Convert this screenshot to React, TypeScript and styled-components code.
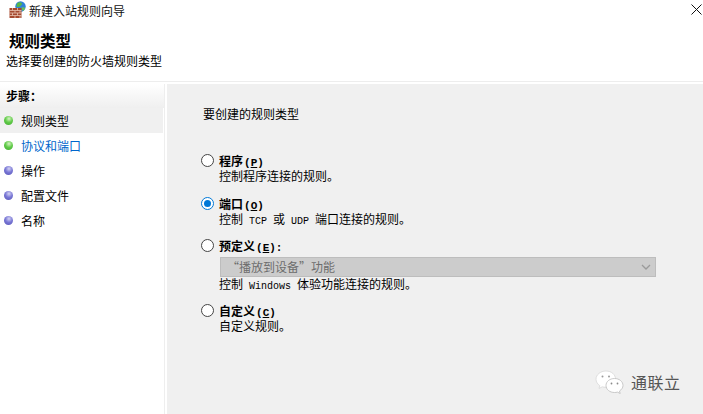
import React from "react";
import styled, { createGlobalStyle } from "styled-components";

const cjk = `"Noto Sans CJK SC", "Liberation Sans", sans-serif`;

const Global = createGlobalStyle`
  html, body { margin: 0; padding: 0; background: #fff; }
  body { font-family: ${cjk}; font-size: 12px; color: #000; }
  #root { width: 703px; height: 414px; overflow: hidden; }
`;

const Window = styled.div`
  position: relative;
  width: 703px;
  height: 414px;
  display: flex;
  flex-direction: column;
  background: #fff;
  overflow: hidden;
`;
const TitleBar = styled.div`
  height: 22px;
  display: flex;
  align-items: center;
  padding-left: 9px;
  gap: 3px;
  line-height: 20px;
`;
const TitleIcon = styled.svg`
  width: 17px;
  height: 17px;
  align-self: flex-start;
  margin-top: 1px;
`;
const TitleText = styled.span`
  flex: 1;
  color: #111;
`;
const Close = styled.svg`
  width: 11px;
  height: 11px;
  margin-right: 1px;
  margin-top: -3px;
`;
const Header = styled.header`
  height: 60px;
  box-sizing: border-box;
  border-bottom: 1px solid #ededed;
  display: flex;
  flex-direction: column;
  padding: 7px 0 0 6px;
`;
const Heading = styled.h1`
  margin: 0 0 0 3px;
  font-size: 15.5px;
  font-weight: 700;
  line-height: 22px;
`;
const Sub = styled.div`
  line-height: 18px;
  margin-top: 1px;
`;
const Body = styled.div`
  flex: 1;
  display: flex;
  margin-top: 2px;
  min-height: 0;
`;
const Side = styled.nav`
  width: 164px;
  border-right: 1px solid #eeeeee;
  margin-right: 2px;
  flex: none;
`;
const StepsHead = styled.div`
  height: 24px;
  box-sizing: border-box;
  padding: 0 0 0 6px;
  line-height: 24px;
  font-weight: 700;
  background: linear-gradient(#ffffff, #efefef);
`;
const Step = styled.div<{ $sel?: boolean; $link?: boolean }>`
  height: 25px;
  display: flex;
  align-items: center;
  gap: 8px;
  padding-left: 4px;
  width: 159px;
  background: ${(p) => (p.$sel ? "#f0f0f0" : "transparent")};
  color: ${(p) => (p.$link ? "#0066cc" : "#000")};
`;
const Dot = styled.span<{ $done?: boolean }>`
  width: 9px;
  height: 9px;
  border-radius: 50%;
  flex: none;
  background: ${(p) =>
    p.$done
      ? "radial-gradient(circle at 55% 30%, #d6f3c4 0, #62cc4a 45%, #3fa82e 100%)"
      : "radial-gradient(circle at 55% 30%, #d5d4f3 0, #7a78d6 45%, #5553b5 100%)"};
`;
const Panel = styled.main`
  flex: 1;
  background: #f0f0f0;
  padding: 21px 0 0 36px;
  display: flex;
  flex-direction: column;
`;
const Prompt = styled.div`
  line-height: 18px;
  margin-bottom: 30px;
`;
const Option = styled.div<{ $gap: number }>`
  display: grid;
  grid-template-columns: 18px 1fr;
  margin-left: -2px;
  margin-bottom: ${(p) => p.$gap}px;
`;
const Radio = styled.span<{ $on?: boolean }>`
  width: 13px;
  height: 13px;
  box-sizing: border-box;
  border-radius: 50%;
  background: #fff;
  border: 1px solid ${(p) => (p.$on ? "#0078d7" : "#444")};
  align-self: center;
  position: relative;
  &::after {
    content: "";
    display: ${(p) => (p.$on ? "block" : "none")};
    position: absolute;
    inset: 2px;
    border-radius: 50%;
    background: #0078d7;
  }
`;
const OptLabel = styled.div`
  font-weight: 700;
  line-height: 15px;
  height: 15px;
`;
const Paren = styled.span`
  font-family: "Liberation Mono", monospace;
  font-size: 11px;
  font-weight: 700;
  padding-left: 1px;
`;
const Key = styled.span`
  text-decoration: underline;
`;
const Latin = styled.span`
  font-family: "Liberation Mono", monospace;
  font-size: 10px;
  white-space: pre;
`;
const Desc = styled.div`
  grid-column: 2;
  line-height: 15px;
  height: 15px;
`;
const Combo = styled.div`
  grid-column: 2;
  width: 436px;
  height: 20px;
  box-sizing: border-box;
  margin: 4px 0 -1px 1px;
  background: #cccccc;
  border: 1px solid #bdbdbd;
  color: #6d6d6d;
  display: flex;
  align-items: center;
  justify-content: space-between;
  padding: 0 4px 0 6px;
  line-height: 18px;
`;
const Watermark = styled.div`
  position: absolute;
  left: 595px;
  top: 370px;
  display: flex;
  align-items: center;
  gap: 7px;
  color: #555;
  font-size: 16px;
  letter-spacing: 0.5px;
`;

function WallIcon() {
  return (
    <TitleIcon viewBox="0 0 17 17">
      <circle cx="11.500" cy="5.500" r="5.200" fill="#2f83d8" />
      <path d="M8 2.500c2-1.600 4-1.400 5 0 .3 1.600-1.500 1.600-2 3-1 .4-2.500 1-3.500 0z" fill="#58b848" />
      <path d="M12.500 6.500c1.400-.6 2.600-.3 3.600.2-.2 1.600-1 2.600-2 3.200-.9-.9-1.600-2-1.600-3.400z" fill="#6cc158" />
      <rect x="0.500" y="7" width="12" height="10" fill="#a5492f" />
      <path d="M.5 9.500h12M.5 12h12M.5 14.500h12M3.500 7v2.500M8.500 7v2.500M6 9.500V12M11 9.500V12M3.500 12v2.500M8.500 12v2.500M6 14.500V17M11 14.500V17" stroke="#e7c3b2" strokeWidth="0.8" fill="none" />
    </TitleIcon>
  );
}

function WeChat() {
  return (
    <svg width="29" height="24" viewBox="0 0 29 24">
      <path d="M11 1C5.500 1 1 4.700 1 9.200c0 2.600 1.500 4.900 3.800 6.400L4 18.500l3.200-1.700c1.100.3 2.400.5 3.800.5.500 0 1 0 1.500-.1 3 0 8-3.400 8-8.200C20.500 4.700 16.500 1 11 1z" fill="#fff" stroke="#d8d8d8" strokeWidth="0.8" />
      <path d="M19.500 8.500c-4.800 0-8.500 3.100-8.500 7s3.700 7 8.500 7c1 0 2-.1 2.900-.4l2.800 1.400-.7-2.500c2-1.300 3.500-3.300 3.500-5.500 0-3.900-3.700-7-8.500-7z" fill="#fff" stroke="#bdbdbd" strokeWidth="0.8" />
      <circle cx="7.500" cy="6.500" r="1" fill="#9a9a9a" />
      <circle cx="14" cy="6.500" r="1" fill="#9a9a9a" />
      <circle cx="16.500" cy="13.500" r="0.9" fill="#8a8a8a" />
      <circle cx="22.500" cy="13.500" r="0.9" fill="#8a8a8a" />
    </svg>
  );
}

export default function App() {
  return (
    <Window>
      <Global />
      <TitleBar>
        <WallIcon />
        <TitleText>新建入站规则向导</TitleText>
        <Close viewBox="0 0 11 11">
          <path d="M.5.5l10 10M10.500.5l-10 10" stroke="#111" strokeWidth="1" fill="none" />
        </Close>
      </TitleBar>
      <Header>
        <Heading>规则类型</Heading>
        <Sub>选择要创建的防火墙规则类型</Sub>
      </Header>
      <Body>
        <Side>
          <StepsHead>步骤：</StepsHead>
          <Step $sel><Dot $done />规则类型</Step>
          <Step $link><Dot $done />协议和端口</Step>
          <Step><Dot />操作</Step>
          <Step><Dot />配置文件</Step>
          <Step><Dot />名称</Step>
        </Side>
        <Panel>
          <Prompt>要创建的规则类型</Prompt>
          <Option $gap={13}>
            <Radio />
            <OptLabel>程序<Paren>(<Key>P</Key>)</Paren></OptLabel>
            <Desc>控制程序连接的规则。</Desc>
          </Option>
          <Option $gap={12}>
            <Radio $on />
            <OptLabel>端口<Paren>(<Key>O</Key>)</Paren></OptLabel>
            <Desc>控制<Latin> TCP </Latin>或<Latin> UDP </Latin>端口连接的规则。</Desc>
          </Option>
          <Option $gap={12}>
            <Radio />
            <OptLabel>预定义<Paren>(<Key>E</Key>):</Paren></OptLabel>
            <Combo>
              <span>“播放到设备”功能</span>
              <svg width="10" height="6" viewBox="0 0 10 6">
                <path d="M1 1l4 4 4-4" stroke="#9a9a9a" strokeWidth="1.300" fill="none" />
              </svg>
            </Combo>
            <Desc>控制<Latin> Windows </Latin>体验功能连接的规则。</Desc>
          </Option>
          <Option $gap={0}>
            <Radio />
            <OptLabel>自定义<Paren>(<Key>C</Key>)</Paren></OptLabel>
            <Desc>自定义规则。</Desc>
          </Option>
        </Panel>
      </Body>
      <Watermark>
        <WeChat />
        <span>通联立</span>
      </Watermark>
    </Window>
  );
}
